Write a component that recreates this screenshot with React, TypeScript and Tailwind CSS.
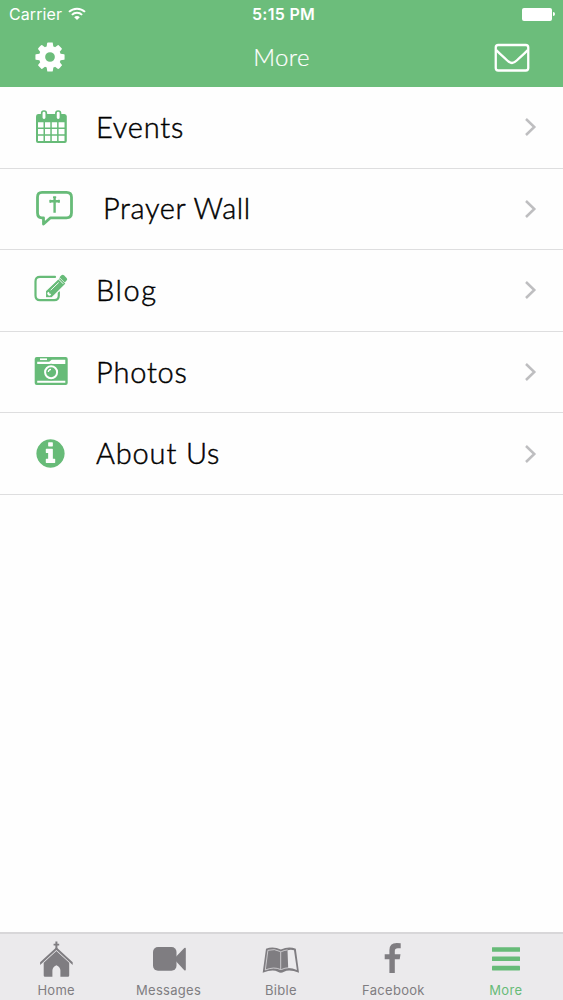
import type { ReactNode } from 'react';

const CogIcon = () => (
  <svg width="34" height="34" viewBox="0 0 1792 1792" fill="currentColor">
    <path d="M1152 896q0-106-75-181t-181-75-181 75-75 181 75 181 181 75 181-75 75-181zm512-109v222q0 12-8 23t-20 13l-185 28q-19 54-39 91 35 50 107 138 10 12 10 25t-9 23q-27 37-99 108t-94 71q-12 0-26-9l-138-108q-44 23-91 38-16 136-29 186-7 28-36 28h-222q-14 0-24.500-8.500t-11.500-21.500l-28-184q-49-16-90-37l-141 107q-10 9-25 9-14 0-25-11-126-114-165-168-7-10-7-23 0-12 8-23 15-21 51-66.500t54-70.500q-27-50-41-99l-183-27q-13-2-21-12.500t-8-23.500v-222q0-12 8-23t19-13l186-28q14-46 39-92-40-57-107-138-10-12-10-24 0-10 9-23 26-36 98.500-107.500t94.500-71.500q13 0 26 10l138 107q44-23 91-38 16-136 29-186 7-28 36-28h222q14 0 24.500 8.500t11.500 21.500l28 184q49 16 90 37l142-107q9-9 24-9 13 0 25 10 129 119 165 170 7 8 7 22 0 12-8 23-15 21-51 66.500t-54 70.500q26 50 41 98l183 28q13 2 21 12.500t8 23.500z" />
  </svg>
);

const WifiIcon = () => (
  <svg width="18" height="14" viewBox="0 0 18 14" fill="none" stroke="currentColor" strokeWidth="2">
    <path d="M1 4.900C5.400.6 12.600.6 17 4.900" />
    <path d="M3.900 7.900c2.900-2.800 7.300-2.800 10.200 0" />
    <path d="M6.200 10.200c1.600-1.500 4-1.500 5.600 0L9 13z" fill="currentColor" stroke="none" />
  </svg>
);

const MailIcon = () => (
  <svg width="36" height="30" viewBox="0 0 36 30" fill="none" stroke="currentColor" strokeWidth="2.300">
    <rect x="1.750" y="2" width="32.500" height="25.500" rx="2.500" />
    <path d="M2.200 7C4 9.300 8.500 12.800 13 17.200c3.800 3.700 6.200 3.700 10 0C27.500 12.800 32 9.300 33.800 7" />
  </svg>
);

const CalendarIcon = () => (
  <svg width="40" height="40" viewBox="0 0 40 40">
    <path d="M8 7H34.500Q36.800 7 36.800 9.500V34Q36.800 36 34.800 36H8Q6 36 6 34V9.500Q6 7 8 7Z" fill="#67bb78" />
    <g fill="#fff">
      <path d="M8 15.300h5.500v5.300H8zM15 15.300h5.300v5.300H15zM21.800 15.300h5.300v5.300h-5.300zM28.600 15.300h5.900v5.300h-5.900z" />
      <path d="M8 22h5.500v5.300H8zM15 22h5.300v5.300H15zM21.800 22h5.300v5.300h-5.300zM28.600 22h5.900v5.300h-5.900z" />
      <path d="M8 28.700h5.500v5.200H8zM15 28.700h5.300v5.200H15zM21.800 28.700h5.300v5.200h-5.300zM28.600 28.700h5.900v5.200h-5.900z" />
    </g>
    <g fill="#fff" stroke="#67bb78" strokeWidth="1.700">
      <rect x="11.700" y="4" width="4.600" height="8.800" rx="2.200" />
      <rect x="25.900" y="4" width="4.600" height="8.800" rx="2.200" />
    </g>
  </svg>
);

const PrayerIcon = () => (
  <svg width="46" height="40" viewBox="0 0 46 40" fill="none" stroke="#67bb78">
    <path d="M12 3.300h24.500Q41.500 3.300 41.500 8.300v15.500Q41.500 28.800 36.500 28.800H20.500L13.500 35V28.800H12Q7.500 28.800 7.500 23.800V8.300Q7.500 3.300 12 3.300Z" strokeWidth="2.800" strokeLinejoin="round" />
    <path d="M24.600 7.500v16.200M19.500 12.300h10.300" strokeWidth="2.400" />
    <path d="M23 8.300h3.200M20.400 10.800v3M28.900 10.800v3" strokeWidth="1.500" />
  </svg>
);

const EditIcon = () => (
  <svg width="40" height="40" viewBox="0 0 40 40" fill="none">
    <path d="M25 6.900H10Q5.500 6.900 5.500 11.500v14Q5.500 30.200 10 30.200h14.200Q28.800 30.200 28.800 25.500V22" stroke="#67bb78" strokeWidth="2.200" strokeLinecap="round" />
    <path d="M15.500 27.700v-6.800L29.800 7.400l6.300 6.300L22 27.700z" fill="#67bb78" stroke="#fff" strokeWidth="1.100" />
    <path d="M29.500 7.200l1.900-1.900q1.300-1.200 2.600 0l2.600 2.600q1.300 1.300 0 2.600L34.800 12.500z" fill="#67bb78" />
    <path d="M28.100 8.700l5.200 5.200M20.700 20.200l8-7.700" stroke="#fff" strokeWidth=".9" />
    <path d="M17.500 22.500l1.500-.8.400 1.800 1.800.4-.9 1.500-1.400.4-1.700-1.700z" fill="#fff" />
  </svg>
);

const CameraIcon = () => (
  <svg width="40" height="40" viewBox="0 0 40 40">
    <rect x="4.700" y="5" width="33" height="28" rx="2" fill="#67bb78" />
    <path d="M7.200 9.700h12l2.500-2h13.600v4.300H7.200zM7.200 28.700h28.100v2H7.200z" fill="#fff" />
    <path d="M10 6.400h7v1.700h-7z" fill="#fff" />
    <circle cx="21.100" cy="20.200" r="8.400" fill="#67bb78" />
    <circle cx="21.100" cy="20.200" r="6" fill="none" stroke="#fff" strokeWidth="2" />
    <path d="M18.300 20.100q.1-2.600 2.700-2.800" fill="none" stroke="#fff" strokeWidth="1.200" />
  </svg>
);

const InfoIcon = () => (
  <svg width="33" height="33" viewBox="0 0 1792 1792" fill="#67bb78">
    <path d="M1152 1376v-160q0-14-9-23t-23-9h-96v-512q0-14-9-23t-23-9h-320q-14 0-23 9t-9 23v160q0 14 9 23t23 9h96v320h-96q-14 0-23 9t-9 23v160q0 14 9 23t23 9h448q14 0 23-9t9-23zm-128-896v-160q0-14-9-23t-23-9h-192q-14 0-23 9t-9 23v160q0 14 9 23t23 9h192q14 0 23-9t9-23zm640 416q0 209-103 385.500t-279.500 279.500-385.500 103-385.500-103-279.500-279.500-103-385.500 103-385.500 279.500-279.500 385.500-103 385.500 103 279.500 279.500 103 385.500z" />
  </svg>
);

const Chevron = () => (
  <svg width="14" height="20" viewBox="0 0 14 20" fill="none" stroke="#bebec0" strokeWidth="2.500">
    <path d="M2 2l8.300 8L2 18" />
  </svg>
);

const HomeIcon = () => (
  <svg width="36" height="40" viewBox="0 0 36 40" fill="currentColor">
    <path d="M17.400 3.500h2v2.200h1.800v1.700h-1.800v4.200h-2V7.400h-1.800V5.700h1.800z" />
    <path d="M18.400 9.300L34.700 24.300v2.700L18.400 12.100 2.100 27v-2.700z" />
    <path d="M18.400 13.100L31.200 24.800V37.500q0 1.300-1.300 1.300h-7.500V32.500q0-3.300-4-5.300-4 2-4 5.300v6.300H7Q5.700 38.800 5.700 37.500V24.800z" />
  </svg>
);

const VideoIcon = () => (
  <svg width="36" height="40" viewBox="0 0 36 40" fill="currentColor">
    <rect x="2" y="9" width="23.500" height="23.800" rx="5" />
    <path d="M24.500 19.300L33.300 10q1.500-.9 1.500.8v20.600q0 1.700-1.500.8L24.500 22.800z" />
  </svg>
);

const BookIcon = () => (
  <svg width="38" height="40" viewBox="0 0 38 40">
    <path d="M4 10.700Q11.500 8 18.900 11.600 26.300 8 33.800 10.700L37 34.800Q27.500 31 22 33.700 18.900 36 15.800 33.700 10.500 31 .7 34.800Z" fill="currentColor" />
    <path d="M5.900 12.300Q12.300 10.300 18.700 13.700V31.600Q12 28.300 3.300 32Z" fill="none" stroke="#ebeaec" strokeWidth=".7" />
    <path d="M25.500 12.200Q29 11.300 32 12.200L34.900 32Q30.700 30 26.200 30Z" fill="#ebeaec" />
    <path d="M19.200 13.700Q22 12.300 25.500 11.900M19.200 31.600Q23 29.800 26.500 29.800" fill="none" stroke="#ebeaec" strokeWidth=".7" />
  </svg>
);

const FacebookIcon = () => (
  <svg width="24" height="40" viewBox="0 0 24 40" fill="currentColor">
    <path d="M19.700 5.200v5h-2.900q-3 0-3 2.700v3.300h5.700l-.8 5.100h-4.900V35H8.400V21.300H3.700v-5.100h4.700v-4.100q0-7.100 7.300-7.100 2.500 0 4 .2z" />
  </svg>
);

const MenuIcon = () => (
  <svg width="32" height="40" viewBox="0 0 32 40" fill="currentColor">
    <rect x="2" y="9.200" width="28" height="4.600" rx=".4" />
    <rect x="2" y="18.500" width="28" height="4.600" rx=".4" />
    <rect x="2" y="27.800" width="28" height="4.600" rx=".4" />
  </svg>
);

type Row = { label: string; icon: ReactNode; text: string };

const rows: Row[] = [
  { label: 'Events', icon: <CalendarIcon />, text: 'pl-[66px] tracking-[0.8px]' },
  { label: 'Prayer Wall', icon: <PrayerIcon />, text: 'pl-[73px] tracking-[0.6px]' },
  { label: 'Blog', icon: <EditIcon />, text: 'pl-[66px] tracking-[1.6px]' },
  { label: 'Photos', icon: <CameraIcon />, text: 'pl-[66px] tracking-[0.8px]' },
  { label: 'About Us', icon: <span className="mt-[3px] ml-[4px] block"><InfoIcon /></span>, text: 'pl-[66px] tracking-[0.85px]' },
];

const tabs = [
  { label: 'Home', icon: <HomeIcon />, color: 'text-[#7f7d81]' },
  { label: 'Messages', icon: <VideoIcon />, color: 'text-[#7f7d81]' },
  { label: 'Bible', icon: <BookIcon />, color: 'text-[#7f7d81]' },
  { label: 'Facebook', icon: <FacebookIcon />, color: 'text-[#7f7d81]' },
  { label: 'More', icon: <MenuIcon />, color: 'text-[#67bb78]' },
];

export default function App() {
  return (
    <div className="flex h-[1000px] w-[563px] flex-col overflow-hidden bg-[#fefefe] font-['Inter',sans-serif]">
      <header className="h-[87px] shrink-0 bg-[#6cbd7b] text-white">
        <div className="grid h-[28px] grid-cols-3 items-center pr-2 pl-[9px]">
          <div className="flex items-center gap-[6px]">
            <span className="text-[16px] tracking-[0.1px]">Carrier</span>
            <WifiIcon />
          </div>
          <span className="pl-[3px] text-center text-[16px] font-semibold tracking-[0.3px]">5:15 PM</span>
          <div className="flex items-center justify-end gap-px">
            <div className="h-[13px] w-[30px] rounded-[2px] bg-white" />
            <div className="h-[4px] w-[2px] rounded-r-sm bg-white" />
          </div>
        </div>
        <div className="grid h-[58px] grid-cols-3 items-center pr-[33px] pl-[33px]">
          <CogIcon />
          <span className="text-center font-['Lato',sans-serif] text-[24px] font-light tracking-[0.4px] [-webkit-text-stroke:0.2px]">More</span>
          <div className="flex justify-end pt-0.5"><MailIcon /></div>
        </div>
      </header>
      <main className="grow">
        <ul className="grid h-[408px] grid-rows-5">
          {rows.map((row) => (
            <li key={row.label} className="flex items-center border-b border-[#dededf] pr-[25px] pl-[30px]">
              <div className="h-10 w-0 overflow-visible">{row.icon}</div>
              <span className={`grow pb-px font-['Lato',sans-serif] text-[29px] leading-10 font-light whitespace-nowrap text-black [-webkit-text-stroke:0.45px] ${row.text}`}>{row.label}</span>
              <Chevron />
            </li>
          ))}
        </ul>
      </main>
      <nav className="grid h-[68px] shrink-0 grid-cols-5 border-t-2 border-[#d8d7d9] bg-[#ebeaec] pr-px">
        {tabs.map((tab) => (
          <div key={tab.label} className={`flex flex-col items-center pt-[4px] ${tab.color}`}>
            {tab.icon}
            <span className="mt-[3px] text-[13px] leading-[18px] tracking-[0.3px]">{tab.label}</span>
          </div>
        ))}
      </nav>
    </div>
  );
}
